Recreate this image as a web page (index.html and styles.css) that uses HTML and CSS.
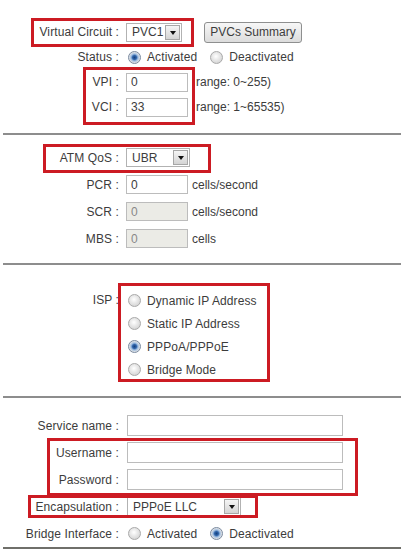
FILE: index.html
```html
<!DOCTYPE html>
<html lang="en">
<head>
  <meta charset="UTF-8">
  <title>ATM / ISP Settings</title>
  <link rel="stylesheet" href="styles.css">
</head>
<body>
  <div class="page">
    <div class="section s1">
      <div class="row">
        <span class="lbl">Virtual Circuit :</span>
        <div class="select sel-vc"><span>PVC1</span><i class="arrow"></i></div>
        <button class="btn">PVCs Summary</button>
      </div>
      <div class="row">
        <span class="lbl">Status :</span>
        <span class="radio on"></span><span class="opt">Activated</span>
        <span class="radio"></span><span class="opt">Deactivated</span>
      </div>
      <div class="row">
        <span class="lbl">VPI :</span>
        <input class="txt short" type="text" value="0">
        <span class="unit range">range: 0~255)</span>
      </div>
      <div class="row">
        <span class="lbl">VCI :</span>
        <input class="txt short" type="text" value="33">
        <span class="unit range">range: 1~65535)</span>
      </div>
    </div>

    <hr class="sep">

    <div class="section s2">
      <div class="row">
        <span class="lbl">ATM QoS :</span>
        <div class="select sel-qos"><span>UBR</span><i class="arrow"></i></div>
      </div>
      <div class="row">
        <span class="lbl">PCR :</span>
        <input class="txt short" type="text" value="0">
        <span class="unit">cells/second</span>
      </div>
      <div class="row">
        <span class="lbl">SCR :</span>
        <input class="txt short" type="text" value="0" disabled>
        <span class="unit">cells/second</span>
      </div>
      <div class="row">
        <span class="lbl">MBS :</span>
        <input class="txt short" type="text" value="0" disabled>
        <span class="unit">cells</span>
      </div>
    </div>

    <hr class="sep">

    <div class="section s3">
      <div class="row isp">
        <span class="lbl">ISP :</span>
        <div class="options">
          <div class="option"><span class="radio"></span><span class="opt">Dynamic IP Address</span></div>
          <div class="option"><span class="radio"></span><span class="opt">Static IP Address</span></div>
          <div class="option"><span class="radio on"></span><span class="opt">PPPoA/PPPoE</span></div>
          <div class="option"><span class="radio"></span><span class="opt">Bridge Mode</span></div>
        </div>
      </div>
    </div>

    <hr class="sep">

    <div class="section s4">
      <div class="row">
        <span class="lbl">Service name :</span>
        <input class="txt long" type="text">
      </div>
      <div class="row">
        <span class="lbl">Username :</span>
        <input class="txt long" type="text">
      </div>
      <div class="row">
        <span class="lbl">Password :</span>
        <input class="txt long" type="password">
      </div>
      <div class="row">
        <span class="lbl">Encapsulation :</span>
        <div class="select sel-enc"><span>PPPoE LLC</span><i class="arrow"></i></div>
      </div>
      <div class="row">
        <span class="lbl">Bridge Interface :</span>
        <span class="radio"></span><span class="opt">Activated</span>
        <span class="radio on"></span><span class="opt">Deactivated</span>
      </div>
    </div>

    <hr class="sep last">

    <!-- red highlight frames drawn over the form -->
    <div class="mark m-vc"></div>
    <div class="mark m-vpi"></div>
    <div class="mark m-qos"></div>
    <div class="mark m-isp"></div>
    <div class="mark m-user"></div>
    <div class="mark m-enc"></div>
  </div>
</body>
</html>
```

FILE: styles.css
```css
body {
  margin: 0;
  background: #fff;
  font-family: "Liberation Sans", Arial, sans-serif;
  font-size: 12px;
  color: #3c3c3c;
}

.page {
  position: relative;
  width: 406px;
  height: 553px;
}

.section {
  display: flex;
  flex-direction: column;
}

.s1 { padding: 20px 0 14px; gap: 1px; }
.s1 .row { height: 24px; }

.s2 { padding: 9px 0 11px; }
.s2 .row { height: 27px; }

.s3 { padding: 24px 0 15px; }

.s4 { padding: 14px 0 0; }
.s4 .row { height: 27px; }

.row {
  display: flex;
  align-items: center;
}

.lbl {
  width: 119px;
  margin-right: 7px;
  text-align: right;
  white-space: nowrap;
  letter-spacing: 0.1px;
}

.sep {
  margin: 0 5px 0 3px;
  border: none;
  border-top: 2px solid #8d8d8d;
  height: 0;
}

.sep.last {
  border-top-color: #6f6f6a;
}

/* fake old style drop down */
.select {
  display: flex;
  align-items: center;
  justify-content: space-between;
  height: 19px;
  box-sizing: border-box;
  border: 1px solid #b2b2b2;
  padding: 0 1px 0 5px;
  background: #fff;
}

.sel-vc { width: 56px; }
.sel-qos { width: 64px; }
.sel-enc { width: 114px; margin-left: 1px; }

.arrow {
  width: 15px;
  height: 15px;
  box-sizing: border-box;
  border: 1px solid #a7a7a7;
  background: linear-gradient(#f5f5f5, #d4d4d4);
  position: relative;
}

.arrow::after {
  content: "";
  position: absolute;
  left: 3.5px;
  top: 5px;
  border-left: 3.5px solid transparent;
  border-right: 3.5px solid transparent;
  border-top: 4px solid #111;
}

.btn {
  margin-left: 22px;
  width: 98px;
  height: 21px;
  padding: 0;
  border: 1px solid #8e8f8f;
  border-radius: 3px;
  background: linear-gradient(#f7f7f7, #dcdcdc);
  font-family: inherit;
  font-size: 12px;
  color: #3c3c3c;
}

.txt {
  box-sizing: border-box;
  border: 1px solid #bcbcbc;
  padding: 0 4px;
  font-family: inherit;
  font-size: 12px;
  color: #3c3c3c;
  background: #fff;
  outline: none;
}

.txt.short { width: 62px; height: 19px; }
.txt.long { width: 216px; height: 21px; margin-left: 1px; }

.txt:disabled {
  background: #ebebe6;
  color: #888;
}

.unit {
  margin-left: 4px;
  white-space: nowrap;
}

.unit.range {
  margin-left: 8px;
}

.radio {
  width: 13px;
  height: 13px;
  box-sizing: border-box;
  margin-left: 2px;
  border: 1px solid #a9a9a9;
  border-radius: 50%;
  background: radial-gradient(circle at 45% 40%, #fff 0, #e6e6e6 45%, #c9c9c9 100%);
  flex: none;
}

.radio.on {
  border-color: #7a8aa0;
  background: radial-gradient(circle, #16407d 0, #2f64aa 2px, #9fbde0 3.5px, #e6e6e6 5.5px);
}

.opt {
  margin-left: 6px;
  margin-right: 11px;
  white-space: nowrap;
  letter-spacing: 0.1px;
}

.isp {
  align-items: flex-start;
}

.isp .lbl {
  line-height: 23px;
}

.options {
  display: flex;
  flex-direction: column;
}

.option {
  height: 23px;
  display: flex;
  align-items: center;
}

.mark {
  position: absolute;
  border: 3px solid #cc1b23;
  box-sizing: border-box;
}

.m-vc { left: 31px; top: 18px; width: 163px; height: 29px; }
.m-vpi { left: 83px; top: 67px; width: 112px; height: 58px; }
.m-qos { left: 43px; top: 144px; width: 168px; height: 29px; }
.m-isp { left: 118px; top: 283px; width: 152px; height: 99px; }
.m-user { left: 47px; top: 438px; width: 311px; height: 58px; }
.m-enc { left: 28px; top: 495px; width: 230px; height: 23px; }
```
